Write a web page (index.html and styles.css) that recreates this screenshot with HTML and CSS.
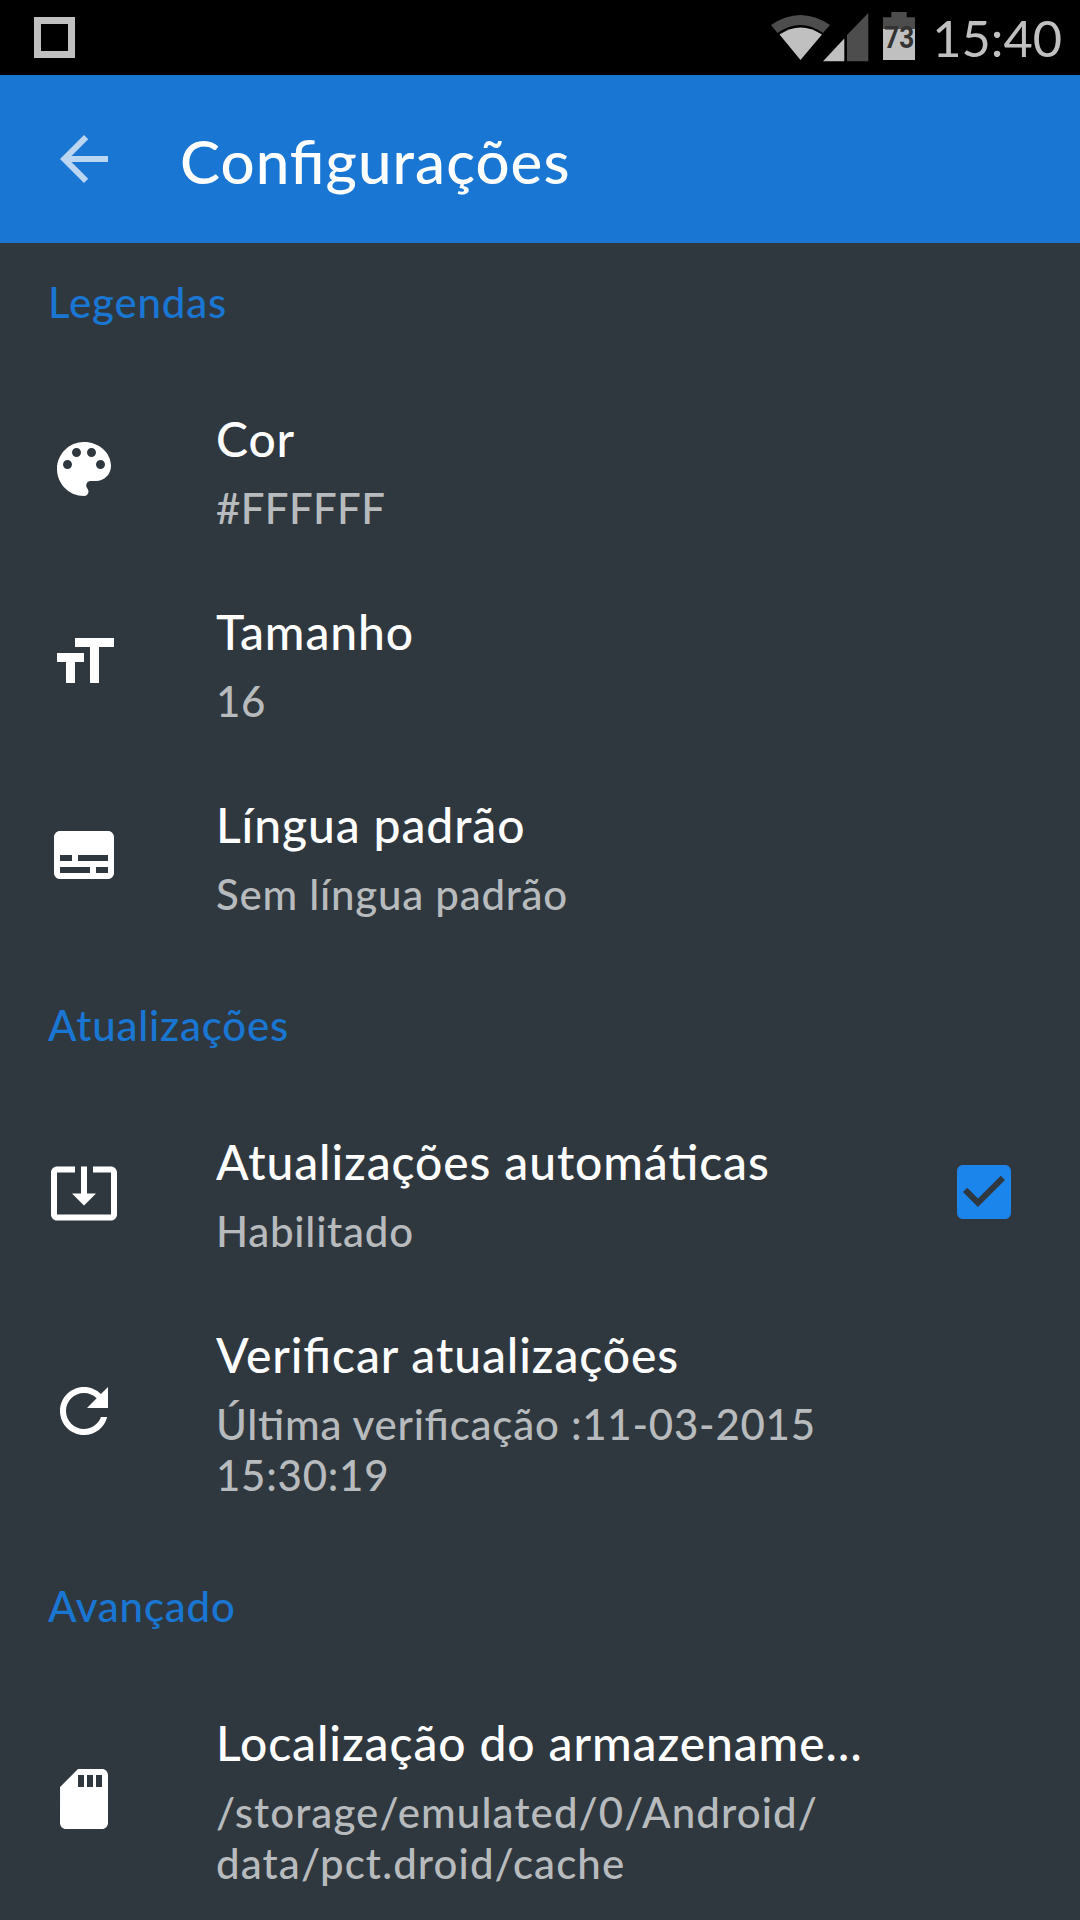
FILE: index.html
```html
<!DOCTYPE html>
<html lang="pt-BR">
<head>
<meta charset="utf-8">
<title>Configurações</title>
<link rel="stylesheet" href="styles.css">
</head>
<body>
<div class="screen">
  <div class="status-bar">
    <span class="notification"></span>
    <svg class="status-icons" viewBox="0 0 150 75">
      <path fill="#4d4d4d" d="M1 25Q30.500 5 60 25L53 33Q30.500 17 7.500 33Z"/>
      <path fill="#c0c0c0" d="M9.500 34.500Q30.500 20.500 52 34.500L30.500 60Z"/>
      <path fill="#c0c0c0" d="M53 61.300L74.300 38.500V61.300Z"/>
      <path fill="#4d4d4d" d="M77 61.300V35L98.300 13V61.300Z"/>
      <path fill="#4d4d4d" d="M113 29V17.300H121.300V12H136.700V17.300H145V29Z"/>
      <path fill="#c0c0c0" d="M113 29H145V60H113Z"/>
      <text class="battery-level" x="114.300" y="47.700" textLength="30" lengthAdjust="spacingAndGlyphs">73</text>
    </svg>
    <span class="clock">15:40</span>
  </div>

  <header class="toolbar">
    <svg class="icon back" viewBox="0 0 24 24"><path d="M20 11H7.830l5.590-5.590L12 4l-8 8 8 8 1.410-1.410L7.830 13H20v-2z"/></svg>
    <h1 class="toolbar-title">Configurações</h1>
  </header>

  <main class="settings">
    <h2 class="section">Legendas</h2>
    <div class="row">
      <svg class="icon" viewBox="0 0 24 24"><path d="M12 3c-4.970 0-9 4.030-9 9s4.030 9 9 9c.830 0 1.500-.670 1.500-1.500 0-.390-.150-.740-.390-1.010-.230-.260-.380-.610-.380-.990 0-.830.670-1.500 1.500-1.500H16c2.760 0 5-2.240 5-5 0-4.420-4.030-8-9-8zm-5.500 9c-.830 0-1.500-.670-1.500-1.500S5.670 9 6.500 9 8 9.670 8 10.500 7.330 12 6.500 12zm3-4C8.670 8 8 7.330 8 6.500S8.670 5 9.500 5s1.500.670 1.500 1.500S10.330 8 9.500 8zm5 0c-.830 0-1.500-.670-1.500-1.500S13.670 5 14.500 5s1.500.670 1.500 1.500S15.330 8 14.500 8zm3 4c-.830 0-1.500-.670-1.500-1.500S16.670 9 17.500 9s1.500.670 1.500 1.500-.670 1.500-1.500 1.500z"/></svg>
      <div class="text"><div class="title">Cor</div><div class="summary caps">#FFFFFF</div></div>
    </div>
    <div class="row">
      <svg class="icon" viewBox="0 0 24 24"><path d="M9 4v3h5v12h3V7h5V4H9zm-6 8h3v7h3v-7h3V9H3v3z"/></svg>
      <div class="text"><div class="title">Tamanho</div><div class="summary">16</div></div>
    </div>
    <div class="row">
      <svg class="icon" viewBox="0 0 24 24"><path d="M20 4H4c-1.100 0-2 .900-2 2v12c0 1.100.900 2 2 2h16c1.100 0 2-.900 2-2V6c0-1.100-.900-2-2-2zM4 12h4v2H4v-2zm10 6H4v-2h10v2zm6 0h-4v-2h4v2zm0-4H10v-2h10v2z"/></svg>
      <div class="text"><div class="title">Língua padrão</div><div class="summary">Sem língua padrão</div></div>
    </div>

    <h2 class="section">Atualizações</h2>
    <div class="row">
      <svg class="icon" viewBox="0 0 24 24"><path d="M12 16.500l4-4h-3v-9h-2v9H8l4 4zm9-13h-6v1.990h6v14.030H3V5.490h6V3.500H3c-1.100 0-2 .900-2 2v14c0 1.100.900 2 2 2h18c1.100 0 2-.900 2-2v-14c0-1.100-.900-2-2-2z"/></svg>
      <div class="text"><div class="title">Atualizações automáticas</div><div class="summary">Habilitado</div></div>
      <svg class="icon checkbox" viewBox="0 0 24 24"><path d="M19 3H5c-1.110 0-2 .900-2 2v14c0 1.100.890 2 2 2h14c1.110 0 2-.900 2-2V5c0-1.100-.890-2-2-2zm-9 14l-5-5 1.410-1.410L10 14.170l7.590-7.590L19 8l-9 9z"/></svg>
    </div>
    <div class="row">
      <svg class="icon" viewBox="0 0 24 24"><path d="M17.650 6.350C16.200 4.900 14.210 4 12 4c-4.420 0-7.990 3.580-7.990 8s3.570 8 7.990 8c3.730 0 6.840-2.550 7.730-6h-2.080c-.820 2.330-3.040 4-5.650 4-3.310 0-6-2.690-6-6s2.690-6 6-6c1.660 0 3.140.690 4.220 1.780L13 11h7V4l-2.350 2.350z"/></svg>
      <div class="text"><div class="title">Verificar atualizações</div><div class="summary">Última verificação :11-03-2015<br>15:30:19</div></div>
    </div>

    <h2 class="section">Avançado</h2>
    <div class="row">
      <svg class="icon" viewBox="0 0 24 24"><path d="M18 2h-8L4.020 8 4 20c0 1.100.900 2 2 2h12c1.100 0 2-.900 2-2V4c0-1.100-.900-2-2-2zm-6 6h-2V4h2v4zm3 0h-2V4h2v4zm3 0h-2V4h2v4z"/></svg>
      <div class="text"><div class="title">Localização do armazename…</div><div class="summary path">/storage/emulated/0/Android/<br>data/pct.droid/cache</div></div>
    </div>
  </main>
</div>
</body>
</html>
```
FILE: styles.css
```css
* { box-sizing: border-box; }

body {
  margin: 0;
  background: #30383f;
  font-family: Lato, sans-serif;
  font-weight: 500;
  font-feature-settings: "liga" 1;
  color: #fff;
}

.screen {
  width: 1080px;
  height: 1920px;
  overflow: hidden;
  background: #30383f;
}

.status-bar {
  display: flex;
  align-items: center;
  height: 75px;
  padding: 0 18px 0 34px;
  background: #000;
}

.notification {
  width: 41px;
  height: 41px;
  border: 7px solid #c0c0c0;
}

.status-icons {
  width: 150px;
  height: 75px;
  margin-left: 695px;
}

.battery-level {
  font: bold 31px Roboto, sans-serif;
  fill: #333;
}

.clock {
  margin-left: auto;
  font-size: 50.5px;
  font-weight: 400;
  line-height: 75px;
  color: #c0c0c0;
}

.toolbar {
  display: flex;
  align-items: center;
  height: 168px;
  padding-left: 48px;
  background: #1976d2;
}

.toolbar-title {
  margin: 3px 0 0 60px;
  font-size: 60px;
  font-weight: 500;
  line-height: 72px;
  letter-spacing: 1.05px;
}

.icon {
  flex: none;
  width: 72px;
  height: 72px;
  fill: #fff;
}

.back { opacity: .7; }

.settings { display: flow-root; }

.section {
  margin: 0;
  padding: 49px 48px 44px;
  font-size: 42px;
  font-weight: 500;
  line-height: 51px;
  letter-spacing: .8px;
  color: #1976d2;
}

.section:first-child { padding-top: 34px; }

.row {
  display: flex;
  align-items: center;
  padding: 33px 60px 32px 48px;
}

.text {
  flex: 1;
  margin: 0 0 -1px 96px;
  white-space: nowrap;
}

.title {
  margin-bottom: 11px;
  font-size: 48px;
  line-height: 67px;
  letter-spacing: .9px;
}

.summary {
  font-size: 42px;
  line-height: 51px;
  letter-spacing: .75px;
  color: #b8bbbd;
}

.summary.caps { letter-spacing: .35px; }

.summary.path { letter-spacing: 1.1px; }

.checkbox { fill: #1c85eb; }
```
